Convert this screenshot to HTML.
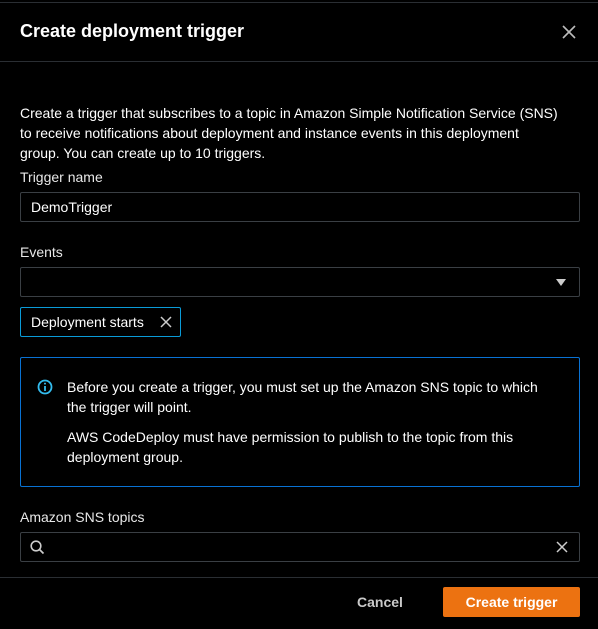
<!DOCTYPE html>
<html><head><style>
*{box-sizing:border-box;margin:0;padding:0}
body{width:598px;height:629px;background:#000;color:#fff;font-family:"Liberation Sans",sans-serif;font-size:14px;position:relative;overflow:hidden}
.a{position:absolute}
.inp{position:absolute;left:20px;width:560px;height:30px;border:1px solid #3a3f44;border-radius:2px;background:#000}
.lbl{position:absolute;left:20px;font-size:14px;color:#e8e8e8}
</style></head><body>
<div class="a" style="left:0;top:2px;width:598px;height:1px;background:#2a2e33"></div>
<div class="a" style="left:20px;top:21px;font-size:18px;font-weight:bold">Create deployment trigger</div>
<svg class="a" style="left:562px;top:25px" width="14" height="14" viewBox="0 0 14 14"><path d="M1 1L13 13M13 1L1 13" stroke="#bbb" stroke-width="1.6"/></svg>
<div class="a" style="left:0;top:61px;width:598px;height:1px;background:#2a2e33"></div>
<div class="a" style="left:20px;top:103px;width:570px;line-height:20px;white-space:nowrap">Create a trigger that subscribes to a topic in Amazon Simple Notification Service (SNS)<br>to receive notifications about deployment and instance events in this deployment<br>group. You can create up to 10 triggers.</div>
<div class="lbl" style="top:169px">Trigger name</div>
<div class="inp" style="top:192px"><span class="a" style="left:10px;top:6px">DemoTrigger</span></div>
<div class="lbl" style="top:244px">Events</div>
<div class="inp" style="top:267px"><svg class="a" style="left:534px;top:10px" width="12" height="9" viewBox="0 0 12 9"><path d="M1 1H11L6 8Z" fill="#ccc"/></svg></div>
<div class="a" style="left:20px;top:307px;width:161px;height:30px;border:1px solid #0a9bd8;border-radius:2px"><span class="a" style="left:10px;top:6px">Deployment starts</span><svg class="a" style="left:139px;top:8px" width="12" height="12" viewBox="0 0 12 12"><path d="M1 1L11 11M11 1L1 11" stroke="#ccc" stroke-width="1.5"/></svg></div>
<div class="a" style="left:20px;top:357px;width:560px;height:130px;border:1px solid #0972d3;border-radius:2px">
<svg class="a" style="left:16px;top:21px" width="16" height="16" viewBox="0 0 16 16"><circle cx="8" cy="8" r="6.5" fill="none" stroke="#33bdf0" stroke-width="1.8"/><path d="M8 7V12" stroke="#33bdf0" stroke-width="1.8"/><circle cx="8" cy="4.6" r="1" fill="#33bdf0"/></svg>
<div class="a" style="left:46px;top:19px;width:510px;line-height:20px;white-space:nowrap">Before you create a trigger, you must set up the Amazon SNS topic to which<br>the trigger will point.</div>
<div class="a" style="left:46px;top:69px;width:510px;line-height:20px;white-space:nowrap">AWS CodeDeploy must have permission to publish to the topic from this<br>deployment group.</div>
</div>
<div class="lbl" style="top:509px">Amazon SNS topics</div>
<div class="inp" style="top:532px">
<svg class="a" style="left:9px;top:7px" width="15" height="15" viewBox="0 0 15 15"><circle cx="6" cy="6" r="4.8" fill="none" stroke="#ccc" stroke-width="1.6"/><path d="M9.5 9.5L13.5 13.5" stroke="#ccc" stroke-width="1.7"/></svg>
<svg class="a" style="left:535px;top:8px" width="12" height="12" viewBox="0 0 12 12"><path d="M1 1L11 11M11 1L1 11" stroke="#ccc" stroke-width="1.5"/></svg>
</div>
<div class="a" style="left:0;top:577px;width:598px;height:1px;background:#2a2e33"></div>
<div class="a" style="left:357px;top:594px;font-weight:bold;color:#c9c9c9">Cancel</div>
<div class="a" style="left:443px;top:587px;width:137px;height:30px;background:#ec7211;border-radius:2px;text-align:center;line-height:30px;font-weight:bold">Create trigger</div>
</body></html>
